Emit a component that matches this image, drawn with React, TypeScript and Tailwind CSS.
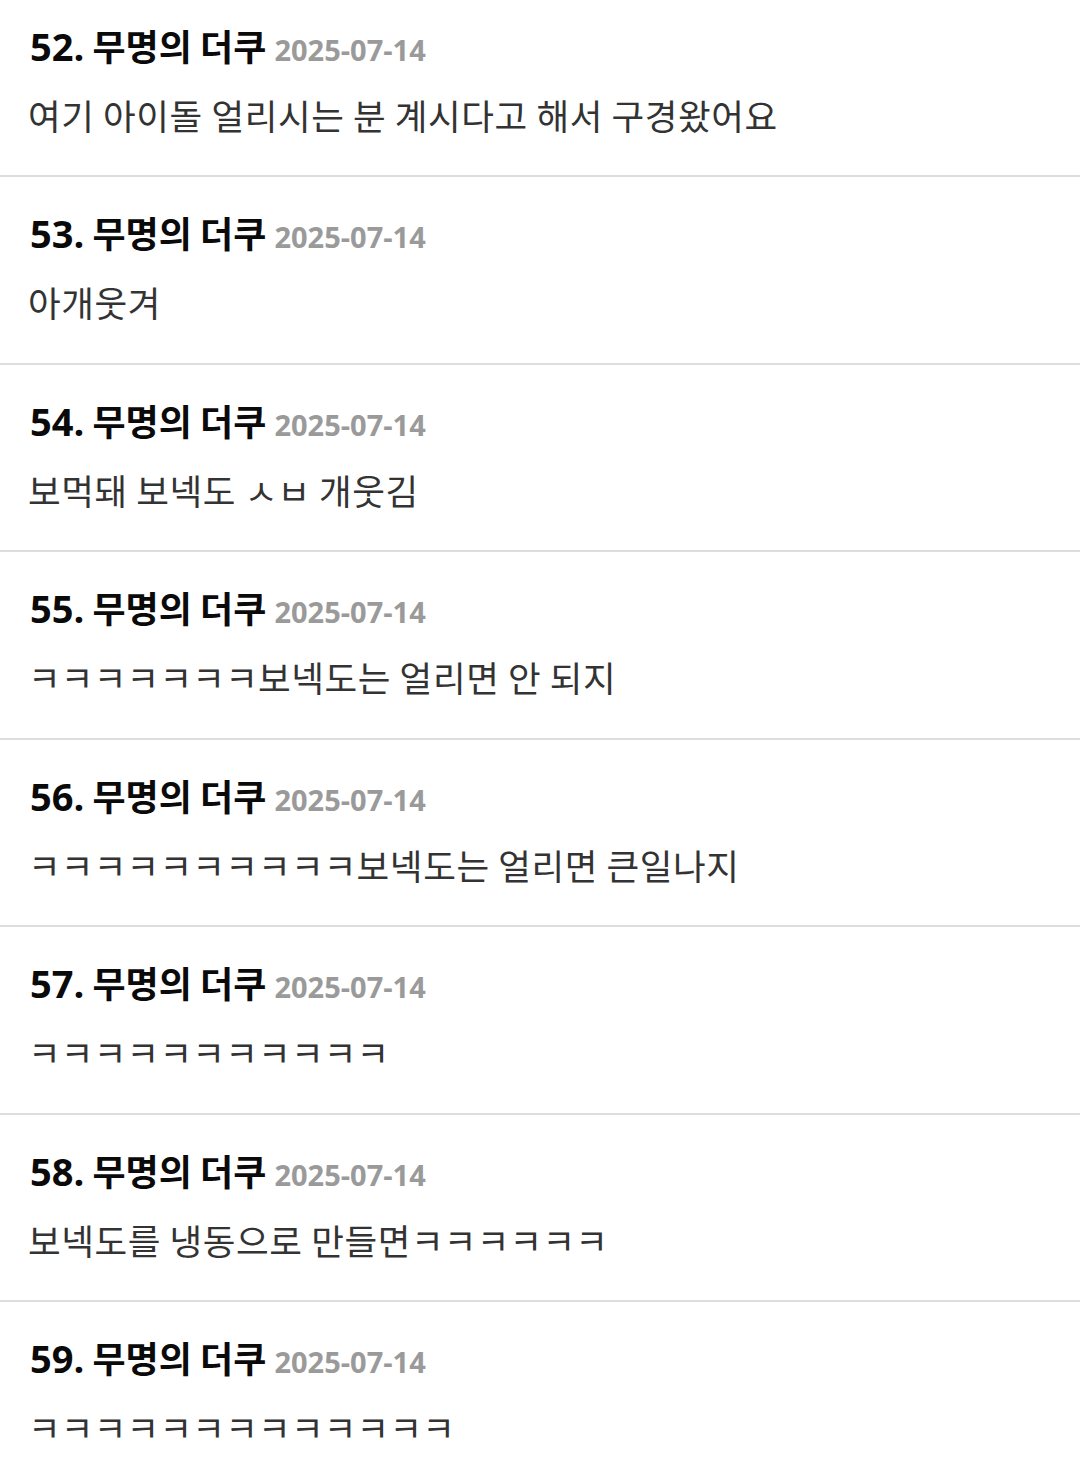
import React from "react";

const rows: { n: number; text: string }[] = [
  { n: 52, text: "여기 아이돌 얼리시는 분 계시다고 해서 구경왔어요" },
  { n: 53, text: "아개웃겨" },
  { n: 54, text: "보먹돼 보넥도 ㅅㅂ 개웃김" },
  { n: 55, text: "ㅋㅋㅋㅋㅋㅋㅋ보넥도는 얼리면 안 되지" },
  { n: 56, text: "ㅋㅋㅋㅋㅋㅋㅋㅋㅋㅋ보넥도는 얼리면 큰일나지" },
  { n: 57, text: "ㅋㅋㅋㅋㅋㅋㅋㅋㅋㅋㅋ" },
  { n: 58, text: "보넥도를 냉동으로 만들면ㅋㅋㅋㅋㅋㅋ" },
  { n: 59, text: "ㅋㅋㅋㅋㅋㅋㅋㅋㅋㅋㅋㅋㅋ" },
];

function Body({ text }: { text: string }) {
  const parts = text.split(/([ㄱ-ㅎㅏ-ㅣ]+)/).filter((p) => p.length > 0);
  return (
    <>
      {parts.map((p, i) =>
        /^[ㄱ-ㅎㅏ-ㅣ]+$/.test(p) ? (
          <span key={i} className="tracking-[0.2px]">
            {p}
          </span>
        ) : (
          <span key={i} className="tracking-[0.6px]">
            {p}
          </span>
        )
      )}
    </>
  );
}

export default function App() {
  return (
    <div className="w-[1080px] h-[1484px] overflow-hidden bg-white">
      <div className="-mt-[10.5px] flex flex-col">
        {rows.map((r) => (
          <div
            key={r.n}
            className="h-[187.5px] border-b-2 border-[#dddddd] px-[28px] pt-[30px] flex flex-col"
          >
            <div className="h-[50px] flex items-baseline whitespace-pre">
              <span className="ml-[2px] text-[38px] leading-[50px] font-bold text-[#0a0a0a] [font-family:'Open_Sans',sans-serif]">
                {r.n}.
              </span>
              <span className="text-[36px] leading-[50px] font-bold text-[#0a0a0a] [font-family:'Noto_Sans_CJK_KR',sans-serif]">
                {" 무명의 더쿠 "}
              </span>
              <span className="text-[29px] leading-[50px] font-bold text-[#9a9a9a] [font-family:'Open_Sans',sans-serif]">
                2025-07-14
              </span>
            </div>
            <div className="mt-[21px] text-[35.5px] leading-[48px] text-[#333333] whitespace-pre [font-family:'Noto_Sans_CJK_KR',sans-serif]">
              <Body text={r.text} />
            </div>
          </div>
        ))}
      </div>
    </div>
  );
}
